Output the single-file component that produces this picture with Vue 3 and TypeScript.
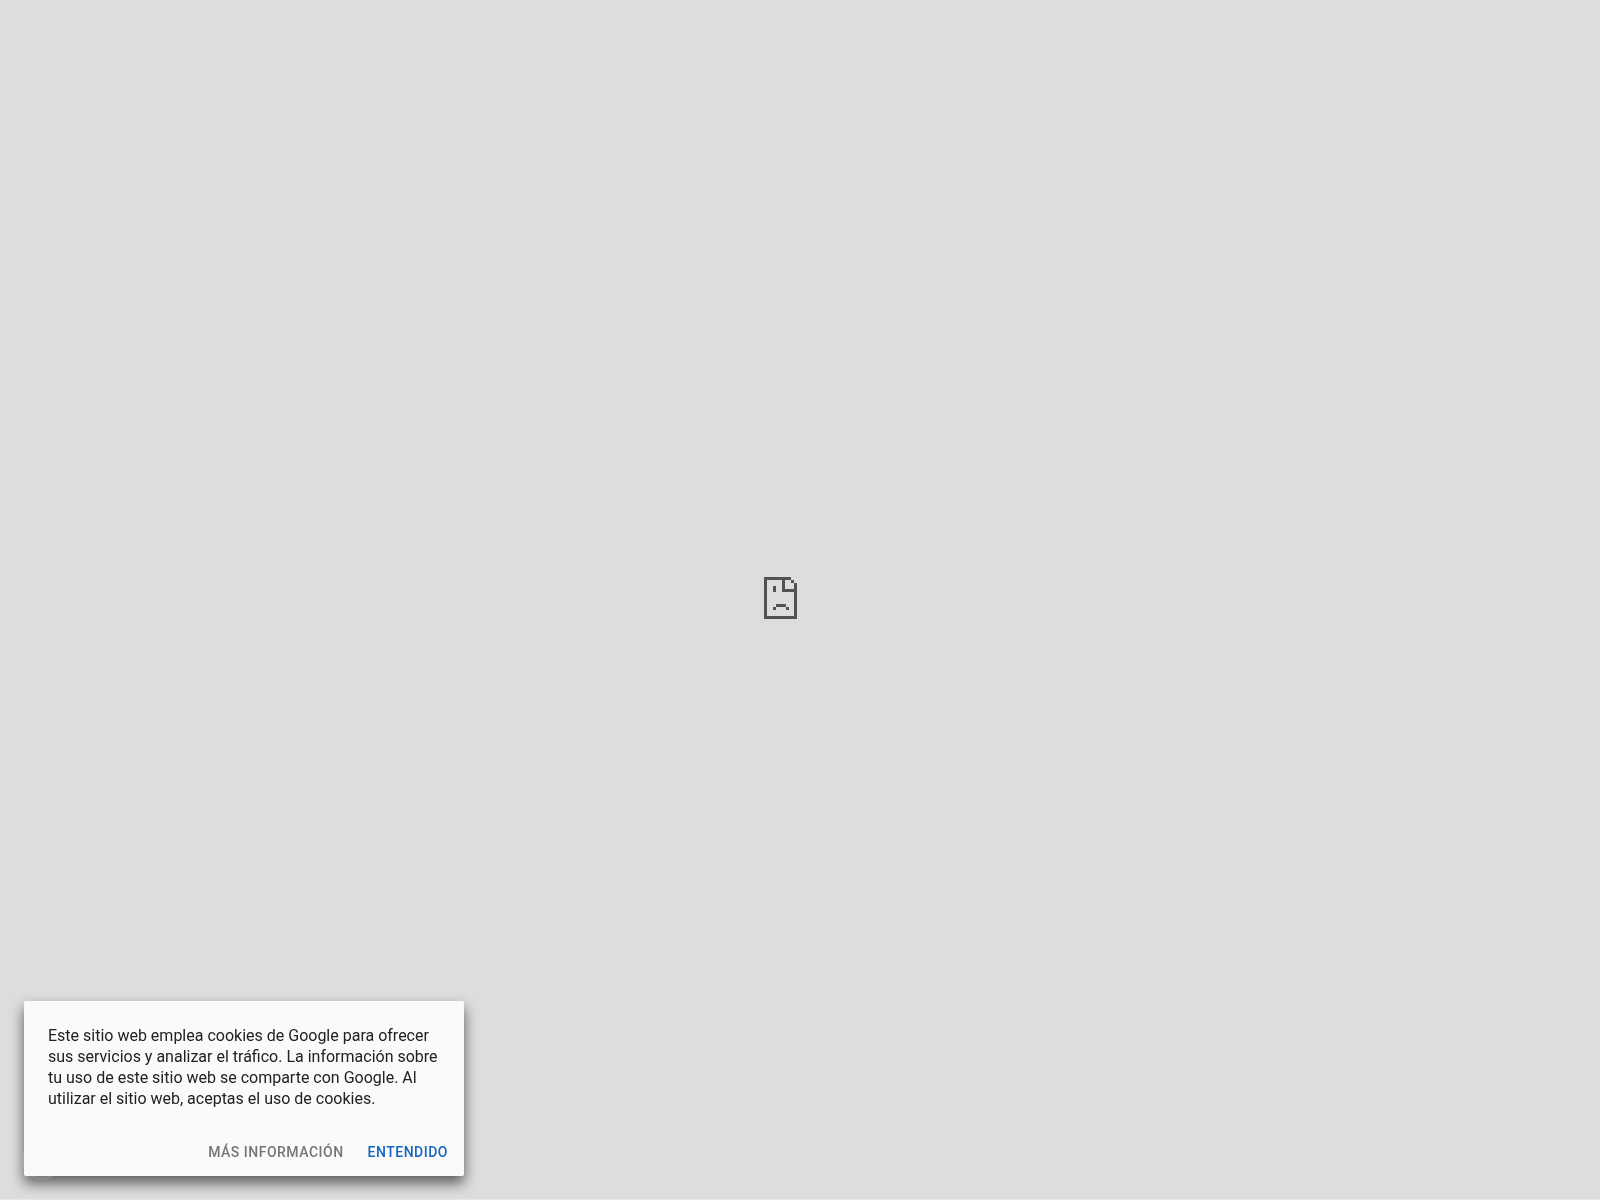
<script setup lang="ts">
import { ref } from 'vue'

const accepted = ref(false)
</script>

<template>
  <main class="page">
    <section class="frame" aria-label="Contenido no disponible">
      <svg class="sad-page" viewBox="0 0 33 42" width="33" height="42" shape-rendering="crispEdges" aria-hidden="true">
        <path
          fill="#525252"
          d="M0 0h27v3H21v9h9V6h3v36H0zM3 3v36h27V15H18V3zM27 3h3v3h-3zM9 9h3v6H9zM12 27h10v3H12zM9 30h3v3H9zM22 30h3v3h-3z"
          fill-rule="evenodd"
        />
      </svg>
    </section>

    <aside v-if="!accepted" class="cookies" aria-label="Aviso de cookies">
      <p class="message">
        Este sitio web emplea cookies de Google para ofrecer sus servicios y analizar el tráfico. La información sobre
        tu uso de este sitio web se comparte con Google. Al utilizar el sitio web, aceptas el uso de cookies.
      </p>
      <div class="actions">
        <a class="action" href="#cookies">MÁS INFORMACIÓN</a>
        <button class="action primary" type="button" @click="accepted = true">ENTENDIDO</button>
      </div>
    </aside>
  </main>
</template>

<style>
body {
  margin: 0;
  background: #ddd;
}
</style>

<style scoped>
.page {
  box-sizing: border-box;
  min-height: 100vh;
  display: flex;
  border-bottom: 1px solid #e6e6e6;
  font-family: Roboto, 'Liberation Sans', sans-serif;
}

.frame {
  flex: 1;
  display: flex;
  align-items: center;
  justify-content: center;
  padding: 0 39px 3px 0;
}

.sad-page {
  display: block;
}

.cookies {
  position: fixed;
  left: 24px;
  bottom: 24px;
  box-sizing: border-box;
  width: 440px;
  max-width: calc(100% - 48px);
  padding: 24px 16px 15px 24px;
  border-radius: 2px;
  background: #fafafa;
  box-shadow: 0 7px 14px rgba(0, 0, 0, 0.6);
}

/* Faint round highlight under the bottom left corner */
.cookies::before {
  content: '';
  position: absolute;
  left: -2px;
  bottom: -4px;
  width: 40px;
  height: 40px;
  border-radius: 50%;
  background: rgba(250, 250, 250, 0.12);
}

.message {
  margin: 0 8px 34px 0;
  color: #212121;
  font-size: 16px;
  line-height: 21px;
}

.actions {
  display: flex;
  justify-content: flex-end;
  gap: 24px;
}

.action {
  padding: 0;
  border: 0;
  background: none;
  color: #757575;
  font: 500 14px/18px Roboto, 'Liberation Sans', sans-serif;
  letter-spacing: 0.5px;
  text-decoration: none;
  cursor: pointer;
}

.primary {
  color: #1565c0;
}
</style>
